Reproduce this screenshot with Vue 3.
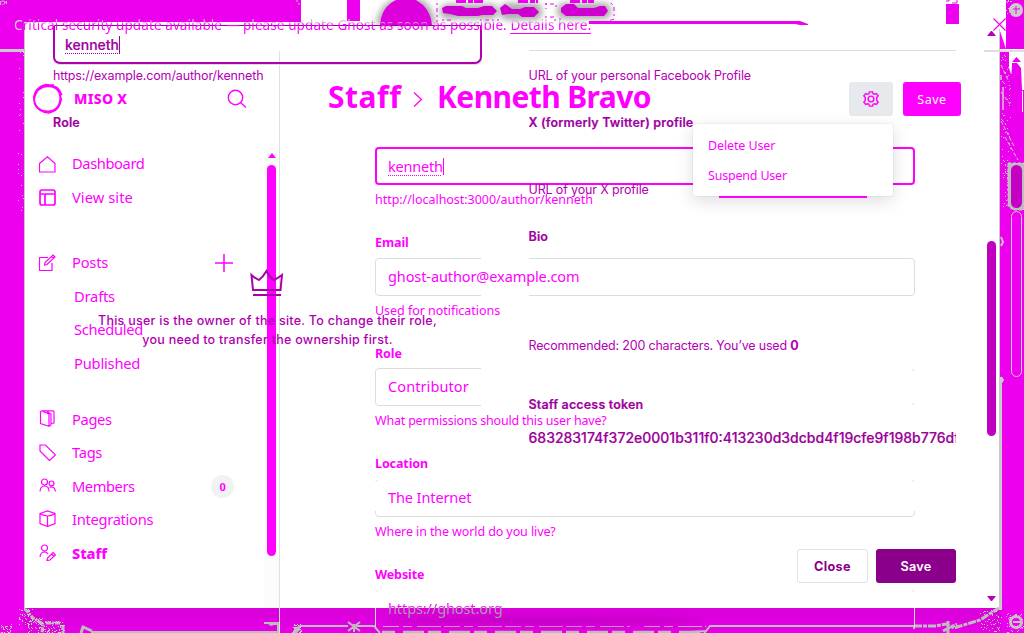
<script setup>
const nav = [
  { label: 'Dashboard', icon: 'home' },
  { label: 'View site', icon: 'layout' },
  { label: 'Posts', icon: 'edit', gap: 'gap-lg', plus: true },
  { label: 'Drafts', sub: true },
  { label: 'Scheduled', sub: true },
  { label: 'Published', sub: true },
  { label: 'Pages', icon: 'pages', gap: 'gap-md' },
  { label: 'Tags', icon: 'tag' },
  { label: 'Members', icon: 'members', badge: '0' },
  { label: 'Integrations', icon: 'box' },
  { label: 'Staff', icon: 'staff', bold: true },
]
const icons = {
  home: 'M.5 7.500 8.500 .8 16 7.500V16H.5Z',
  layout: 'M3 1H14Q16 1 16 3V14Q16 16 14 16H3Q1 16 1 14V3Q1 1 3 1ZM1 5H16M6 5V16',
  edit: 'M9 3.5H.5V16.500H13V9M14 1 16 3 8 10.500 5.500 11 6 8.500ZM12.5 2.5 14.5 4.5',
  pages: 'M3 .8H14Q15 .8 15 2V13L12 13.500M3 .8Q1.500 .8 1.500 2V13.500L10 16.200V4L4 1.500M8 1.500 12 4V15L10 16.200',
  tag: 'M1 1H6.500L16.500 11 10.500 16.500 1 7Z',
  members: 'M5.5 2A3 3 0 1 1 5.5 8A3 3 0 1 1 5.5 2M1 14.500Q1.5 9 5.5 9Q10 9 10 14.500M12.5 4A2.4 2.4 0 1 1 12.5 8.8A2.4 2.4 0 1 1 12.5 4M10.5 10.5Q15.5 8.5 16.5 14.500',
  box: 'M1 3.500 8.5 1 16 3.500V13.500L8.5 16.5 1 13.500ZM1 3.500Q5 6 8.5 6Q12 6 16 3.500M8.5 6V16.5M7 6H10',
  staff: 'M5.5 1A3 3 0 1 1 5.5 7A3 3 0 1 1 5.5 1M1 13Q1.5 8 5.5 8Q8 8 9 10M14 8.5 16.5 11 11 16 8 16.5 8.5 14ZM12.5 10 15 12.5',
}
const fields = [
  { label: 'Email', value: 'ghost-author@example.com', hint: 'Used for notifications', cls: 'f-email',
    path: 'M106 .5H4Q.5 .5 .5 4V34Q.5 37.500 4 37.5H106M154 .5H536Q539.5 .5 539.5 4V34Q539.5 37.500 536 37.5H154' },
  { label: 'Role', value: 'Contributor', hint: 'What permissions should this user have?', cls: 'f-role',
    path: 'M106 .5H4Q.5 .5 .5 4V34Q.5 37.500 4 37.5H106M537 .5L539.500 3M537 37.500L539.500 35' },
  { label: 'Location', value: 'The Internet', hint: 'Where in the world do you live?', cls: 'f-location',
    path: 'M.5 3L3 .5M537 .5L539.500 3M.5 32V34Q.5 37.500 4 37.5H536Q539.500 37.500 539.500 34V32' },
  { label: 'Website', value: 'https://ghost.org', hint: '', cls: 'f-website',
    path: 'M.5 3L3 .5M537 .5L539.500 3M.5 19V38M539.500 19V38' },
]

// Deterministic grain scattered along the window frame.
function grain(seed, count, x, y, w, h) {
  let s = seed * 7919
  const next = () => (s = (s * 16807) % 2147483647) / 2147483647
  next()
  let d = ''
  for (let i = 0; i < count; i++) {
    d += `M${Math.floor(x + next() * w)} ${Math.floor(y + next() * h)}h1v1h-1z`
  }
  return d
}
const speckles = [
  grain(71, 26, 18, 40, 6, 172),
  grain(31, 10, 0, 0, 8, 5),
  grain(93, 45, 19, 609, 14, 16),
  grain(57, 50, 28, 618, 16, 15),
  grain(55, 60, 44, 621, 21, 12),
  grain(12, 30, 0, 624, 12, 9),
  grain(47, 50, 1001, 55, 10, 120),
  grain(61, 25, 1003, 160, 6, 48),
  grain(29, 16, 1006, 0, 6, 16),
  grain(83, 60, 980, 610, 22, 22),
  grain(88, 50, 1006, 613, 18, 20),
  grain(19, 30, 292, 624, 10, 9),
].join('')
</script>

<template>
  <div class="stage">
    <svg class="layer backdrop" viewBox="0 0 1024 633" aria-hidden="true">
      <defs>
        <filter id="soft" x="-20%" y="-80%" width="140%" height="260%"><feGaussianBlur stdDeviation="3" /></filter>
        <linearGradient id="base" x2="0" y2="1"><stop stop-color="#d800d8" /><stop offset="1" stop-color="#e600e6" /></linearGradient>
      </defs>
      <path fill="#ed00ed" d="M0 0H301V22H24V633H0ZM1006 0H1024V49H1006ZM1000 52H1024V633H1000Z" />
      <path fill="url(#base)" d="M24 608H1002V633H24Z" />
      <path fill="#cacaca" d="M0 49H24V52H0ZM24 25H25V610H24ZM999 29H1000V608H999ZM999 377H1002V610H999Z" />
      <path fill="#ddd" d="M984 50H1024V52H984Z" />
      <path fill="#f0f" d="M1000 31 1006 49H1000Z" />

      <rect x="347" width="13" height="21" fill="#ed00ed" />
      <rect x="946" y="4" width="13" height="20" fill="#ed00ed" />
      <path d="M946 1h3v-1M952 3h5v-3" stroke="#ed00ed" fill="none" />
      <g fill="#aaa" filter="url(#soft)">
        <path d="M376 25Q380-2 406-3T436 25Z" />
        <rect x="440" y="4" width="58" height="15" rx="7" />
        <rect x="500" y="3" width="42" height="17" rx="7" />
        <rect x="557" y="3" width="54" height="16" rx="7" />
      </g>
      <path fill="#dd00dd" d="M380 25Q381 10 391 3L396 0H416L423 5Q431 13 432 25Z" />
      <g fill="#cf00cf">
        <path d="M442 8 446 6H462L466 8H478L484 6H492L497 11 493 15H482L478 16H458L450 14 443 13Z" />
        <path d="M500 8 505 4 512 9H520L525 7H534L539 12 534 17H522L518 14H508L502 15Z" />
        <path d="M561 8 566 4H574L578 8H594L600 6H605L608 11 604 16H566L561 12Z" />
      </g>
      <path d="M456 1H483M518 1H538M570 1H594" stroke="#ed00ed" stroke-width="4" stroke-dasharray="10 2 5 1" />
      <path d="M437 3V22M545 4H556V10M545 17H555V22M611 3 614 7V19L606 22M442 20H452M480 20H499M546 3V9M560 18V22" fill="none" stroke="#ed00ed" stroke-dasharray="2 3 4 3" />
      <path fill="#ed00ed" d="M589 21H800L808 24V25H800L795 24H589Z" />

      <path d="M0 2H8M3 0V5M297 0V3L301 5" stroke="#cacaca" fill="none" stroke-dasharray="2 2" />
      <path d="M25 609 33 618 43 624 42 633M46 623H60M63 625V633" fill="none" stroke="#bdbdbd" stroke-width="3" stroke-dasharray="5 1 2 1" />
      <path d="M81 633 83 627 92 631" fill="none" stroke="#bdbdbd" stroke-width="3" />
      <path d="M91 632H279" stroke="#bdbdbd" stroke-width="2" />
      <path fill="#bdbdbd" d="M264 622H280V633H277V625H274L271 626 268 624H264ZM292 633 295 628 300 625V630L297 633Z" />
      <path d="M279.500 608V633M375.500 608V627" stroke="#bdbdbd" />
      <path d="M300 626H348M356 626H374L380 633M348 622 360 631M348 631 360 622M354 624V632" fill="none" stroke="#bdbdbd" stroke-width="2" />
      <path d="M383 626.500H630M644 626.500H706" fill="none" stroke="#bdbdbd" stroke-dasharray="16 4 9 5 24 3" />
      <path d="M382 632H706" stroke="#bdbdbd" stroke-width="2.500" stroke-dasharray="13 8 21 4" />
      <path d="M690 632 706 631 710 626H914V629" fill="none" stroke="#bdbdbd" stroke-width="2" />
      <path d="M914 626H936L946 624 954 628 980 620 999 608M948 621V633M943 631 957 624" fill="none" stroke="#bdbdbd" stroke-width="3" stroke-dasharray="8 1 4 1" />
      <path :d="speckles" fill="#c9c9c9" />
      <ellipse cx="545" cy="621" rx="160" ry="5" fill="#b800b8" opacity=".6" filter="url(#soft)" />

      <circle cx="1016" cy="10" r="7" fill="#ccc" />
      <path d="M1016 6V14M1013 9H1020M1008 16 1011 13M1008 3 1011 6" stroke="#ed00ed" />
      <path fill="#fff" d="M1009 52H1024V90H1022L1021 68 1017 63H1012V74H1011L1009 68ZM1022 91H1023V112H1022Z" />
      <path fill="#ed00ed" d="M1012 62 1016.500 57 1021 62ZM1012 65 1017 64 1020 70 1021 80H1011Z" />
      <path d="M1001 65 1009 82M1001 92 1010 104M1001 121 1014 146M1001 119 1006 124M1005 137 1018 160" stroke="#d0d0d0" stroke-dasharray="4 2" />
      <path d="M1001 75V80M1003 87V110" stroke="#cacaca" stroke-width="1.500" />
      <path d="M1008 163H1024V210H1013L1008 206Z" fill="#bcbcbc" stroke="#ccc" stroke-dasharray="3 2" />
      <rect x="1011" y="165" width="11" height="43" rx="5.500" fill="#c400c4" />
      <rect x="1011.500" y="211.500" width="10" height="165" rx="5" fill="#ed00ed" stroke="#dcc8dc" />
      <path d="M1001 237 1003 242 1001 246M1001 377 1003 380 1001 383" fill="none" stroke="#cacaca" stroke-width="2" />
      <circle cx="1016" cy="622" r="7" fill="#c4c4c4" /><circle cx="1016" cy="622" r="4" fill="#ed00ed" />
      <path d="M1013 622H1020" stroke="#c4c4c4" stroke-width="2" />
    </svg>

    <aside class="layer sidebar">
      <header class="brand">
        <svg width="32" height="32" viewBox="0 0 32 32" fill="none" stroke="#f0f">
          <path stroke-width="2" d="M16 3Q27 3 28.500 14 28 28 16 28.500 3 28 2 16 4 4 16 3Z" />
          <path stroke-width="1.300" d="M1.500 15Q3 4 14 1.500Q27 2 30 12M2 20Q7 30 17 30Q28 28 29.500 15M6 6Q12 1 22 2" />
        </svg>
        <strong>MISO X</strong>
        <svg class="search" width="20" height="20" viewBox="0 0 20 20" fill="none" stroke="#f0f" stroke-width="1.400"><circle cx="8.500" cy="8.500" r="7.200" /><path d="M13.700 13.700 19 18.500" /></svg>
      </header>
      <nav>
        <div v-for="item in nav" :key="item.label" class="row" :class="[item.gap, { sub: item.sub, bold: item.bold }]">
          <svg v-if="item.icon" width="17" height="17" viewBox="0 0 17 17" fill="none" stroke="#f0f" :stroke-width="item.icon === 'layout' ? 1.7 : 1.2"><path :d="icons[item.icon]" /></svg>
          <span :class="'n-' + item.label.split(' ')[0].toLowerCase()">{{ item.label }}</span>
          <svg v-if="item.plus" class="plus" width="18" height="18" viewBox="0 0 18 18" stroke="#f0f" stroke-width="1.500"><path d="M0 9H18M9 0V18" /></svg>
          <b v-if="item.badge" class="badge">{{ item.badge }}</b>
        </div>
      </nav>
      <div class="track"><i class="arrow"></i><i class="thumb"></i></div>
    </aside>

    <main class="layer page">
      <header class="page-head">
        <h1>Staff</h1>
        <svg width="10" height="16" viewBox="0 0 10 16" fill="none" stroke="#f0f" stroke-width="1.300"><path d="M1 1.500 8.500 8.500 1 15.500" /></svg>
        <h1 class="who">Kenneth Bravo</h1>
        <button class="gear"><svg width="16" height="16" viewBox="0 0 18 18" fill="none" stroke="#f0f" stroke-width="1.600"><circle cx="9" cy="9" r="3.200" /><path d="M7.300 1H10.700L11.300 3 12.900 3.700 15 3 17 5.500 15.400 7.300V10.700L17 12.500 15 15 12.900 14.300 11.300 15 10.700 17H7.300L6.700 15 5.100 14.300 3 15 1 12.500 2.600 10.700V7.300L1 5.500 3 3 5.100 3.700 6.700 3Z" /></svg></button>
        <button class="save">Save</button>
      </header>
      <form>
        <div class="input focus"><span class="typed">kenneth</span></div>
        <p class="hint h-url">http://localhost:3000/author/kenneth</p>
        <section v-for="f in fields" :key="f.label" class="field" :class="f.cls">
          <label>{{ f.label }}</label>
          <div class="input">
            <svg width="540" height="38" fill="none" stroke="#ddd"><path :d="f.path" /></svg>
            <span>{{ f.value }}</span>
          </div>
          <p v-if="f.hint" class="hint">{{ f.hint }}</p>
        </section>
      </form>
    </main>

    <div class="layer modal">
      <div class="left">
        <div class="slug"><span class="typed">kenneth</span></div>
        <p class="note url">https://example.com/author/kenneth</p>
        <h2 class="user-role">Role</h2>
        <svg class="crown" width="34" height="28" viewBox="0 0 34 28" fill="none" stroke="#a0a" stroke-width="2"><path d="M3 21 1.500 6Q6 10 9 11Q13 8 16.500 2Q20 9 24 11Q28 9 32 6L30.500 21ZM3 26H31" /></svg>
        <p class="owner">This user is the owner of the site. To change their role,<br>you need to transfer the ownership first.</p>
      </div>
      <div class="right">
        <p class="note fb">URL of your personal Facebook Profile</p>
        <h2 class="x">X (formerly Twitter) profile</h2>
        <p class="note xurl">URL of your X profile</p>
        <h2 class="bio">Bio</h2>
        <p class="note rec">Recommended: 200 characters. You’ve used <b>0</b></p>
        <h2 class="token-label">Staff access token</h2>
        <p class="token">683283174f372e0001b311f0:413230d3dcbd4f19cfe9f198b776df</p>
        <div class="actions"><button class="close">Close</button><button class="save-dark">Save</button></div>
      </div>
      <div class="modal-scroll"><i class="arrow"></i><i class="thumb"></i><i class="arrow down"></i></div>
    </div>

    <div class="menu"><span class="m1">Delete User</span><span class="m2">Suspend User</span></div>
    <div class="alert"><span>Critical security update available — please update Ghost as soon as possible. <u>Details here.</u></span></div>
    <svg class="dismiss" width="13" height="13" viewBox="0 0 13 13" fill="none" stroke="#ee00ee" stroke-width="1.200"><path d="M.5 .5 12.500 12.500M12.500 .5 .5 12.500" /></svg>
  </div>
</template>

<style>
html, body { overflow: hidden; background: #fff; }
</style>
<style scoped>
* { box-sizing: border-box; }
p, h1, h2 { margin: 0; }
button { border: 0; padding: 0; font: inherit; }
svg { display: block; flex: none; }
.stage { position: relative; width: 1024px; height: 633px; overflow: hidden; background: #fff; font-family: "Noto Sans", "Open Sans", sans-serif; color: #f0f; white-space: nowrap; }
.layer { position: absolute; inset: 0; }

.sidebar { width: 280px; padding-left: 32px; border-right: 1px solid #e0e0e0; clip-path: inset(51px 0 0 0); }
.brand { display: flex; align-items: center; height: 32px; margin-top: 83px; }
.brand strong { width: 154px; padding-left: 10px; margin-top: -2px; font-size: 14px; font-weight: 800; letter-spacing: .3px; }
.brand .search { margin-left: 9px; }
nav { display: flex; flex-direction: column; margin-top: 32px; width: 204px; padding-left: 7px; }
.row { display: flex; align-items: center; height: 33.4px; font-size: 14.700px; letter-spacing: -.3px; }
.row > svg:first-child { margin-top: 1px; }
.row span { margin-left: 16px; padding-top: 1px; }
.row .n-dashboard { padding-top: 0; margin-top: -1px; letter-spacing: -.4px; }
.row .n-view { padding-top: 0; margin-top: -1px; letter-spacing: .05px; }
.row .n-posts { padding-top: 0; margin-top: -1px; letter-spacing: -.2px; }
.row.sub span { margin-left: 35px; }
.row .n-drafts, .row .n-published { letter-spacing: -.2px; }
.row .n-pages { letter-spacing: -.35px; }
.row .n-members { letter-spacing: -.45px; }
.row.bold span { font-weight: 800; letter-spacing: -.1px; padding-top: 2px; }
.gap-lg { margin-top: 31.600px; }
.gap-md { margin-top: 22.600px; }
.plus { margin-left: auto; margin-right: 3px; margin-top: 2px; }
.badge { margin-left: auto; margin-right: 2px; margin-top: 2px; width: 23px; height: 23px; line-height: 23px; border-radius: 50%; background: #f1f2f4; text-align: center; font-size: 11px; }
.track { position: absolute; right: 0; top: 147px; width: 15px; height: 461px; background: #fcfcfc; display: flex; flex-direction: column; align-items: center; padding-top: 6px; }
.arrow { border: 4.500px solid transparent; border-top: 0; border-bottom: 5px solid #f0f; }
.track .thumb { width: 9px; height: 391px; margin-top: 7px; background: #f0f; border-radius: 5px; }

.page { padding-left: 328px; }
.page-head { display: flex; align-items: center; height: 34px; margin-top: 82px; width: 633px; }
h1 { font-size: 30px; line-height: 34px; font-weight: 700; margin-top: -4px; width: 85px; letter-spacing: .5px; }
.who { margin-left: 14px; width: 412px; letter-spacing: -.6px; }
.gear { width: 44px; height: 34px; border-radius: 3px; background: #e6eaed; display: grid; place-items: center; }
.save { width: 58px; height: 34px; margin-left: 10px; border-radius: 3px; background: #f0f; color: #fff; font-size: 12.500px; letter-spacing: .5px; }
form { margin: 31px 0 0 47px; width: 540px; }
.input { position: relative; height: 38px; padding-left: 13px; font-size: 14.500px; line-height: 37px; letter-spacing: -.1px; }
.input svg { position: absolute; inset: 0; }
.input span { position: relative; }
.focus { border: 2px solid #f0f; border-radius: 4px; padding-left: 11px; line-height: 35px; letter-spacing: -.2px; }
.typed { display: inline-block; border-right: 1px solid currentColor; line-height: 17px; text-decoration: underline dotted 1px; text-underline-offset: 3px; }
.hint { height: 20px; margin-top: 4px; font-size: 12.500px; line-height: 22px; letter-spacing: -.04px; }
.h-url { margin-bottom: 23px; }
.field { height: 110px; }
.f-role { height: 111px; }
.f-role label { line-height: 24px; }
.f-role .hint { letter-spacing: -.2px; }
.f-location .hint { letter-spacing: -.1px; }
.f-role .input { letter-spacing: .1px; }
.f-website label { line-height: 24px; }
.f-website .input { line-height: 39px; }
.f-website .input span { color: transparent; background: linear-gradient(#f0f 9px, #a8a8a8 10px); background-clip: text; -webkit-background-clip: text; }
label { display: block; height: 26px; line-height: 22px; font-size: 12.500px; font-weight: 700; letter-spacing: -.1px; }

.modal { font-family: Inter, sans-serif; color: #a000a0; display: grid; grid-template-columns: 429px 427.500px; column-gap: 46.500px; padding-left: 53px; }
.slug { margin-top: 25px; height: 38.500px; border: 2px solid #b000b0; border-top: 1px solid #909; border-radius: 2px 2px 7px 7px; padding-left: 10.500px; font-size: 14px; line-height: 38px; font-weight: 500; box-shadow: 0 1px #ddd; margin-left: -.5px; }
.slug .typed { line-height: 18px; -webkit-text-stroke: .2px; }
.note { font-size: 12.500px; line-height: 18px; color: #b400b4; letter-spacing: -.14px; }
.url { margin-top: 3.500px; }
h2 { font-size: 12.500px; line-height: 18px; font-weight: 600; letter-spacing: .16px; -webkit-text-stroke: .2px; }
.user-role { margin-top: 29px; }
.crown { margin: 137px 0 0 197px; }
.owner { margin-top: 14px; text-align: center; font-size: 12.500px; line-height: 19px; font-weight: 500; letter-spacing: .26px; color: #b000b0; }
.right { overflow: hidden; }
.fb { border-top: 1px solid #ddd; margin-top: 50px; padding-top: 16px; }
.x { margin-top: 29px; }
.xurl { margin-top: 49px; }
.bio { margin-top: 29px; }
.rec { margin-top: 91px; letter-spacing: -.18px; }
.token-label { margin-top: 41px; }
.token { margin-top: 14px; font-size: 14px; line-height: 20px; font-weight: 500; color: #9a009a; overflow: hidden; -webkit-text-stroke: .2px; }
.actions { display: flex; justify-content: flex-end; gap: 8px; margin-top: 101px; }
.actions button { height: 34px; border-radius: 3px; font-size: 12.700px; }
.actions .close { width: 71px; color: #8b008b; background: #fff; border: 1px solid #e2e2e2; font-weight: 700; letter-spacing: .3px; }
.actions .save-dark { width: 80px; background: #8b008b; color: #fff; font-weight: 600; letter-spacing: .3px; }
.modal-scroll { position: absolute; left: 987px; top: 31px; width: 9px; display: flex; flex-direction: column; }
.modal-scroll .arrow { border-bottom-color: #b800b8; }
.modal-scroll .thumb { height: 195px; margin: 205px 0 160px; background: #c000c0; border-radius: 5px; }
.modal-scroll .down { transform: rotate(180deg); }

.menu { position: absolute; left: 693px; top: 124px; width: 200px; height: 72px; padding: 7px 15px; background: #fff; border-radius: 3px; box-shadow: 0 5px 18px #0002, 0 0 2px #0002; font-size: 12.500px; letter-spacing: -.12px; display: flex; flex-direction: column; }
.menu span { line-height: 30px; }
.menu .m2 { letter-spacing: -.2px; }
.menu::after { content: ""; position: absolute; left: 26px; bottom: -2px; width: 148px; height: 2px; background: #f0f; }
.alert { position: absolute; left: 14px; top: 15px; font-size: 13.500px; line-height: 20px; letter-spacing: .1px; }
.alert span { color: transparent; background: linear-gradient(90deg, #dcc8dc 10px, transparent 10px), linear-gradient(#d4b8d4 6px, #d0a0d0 7px, #f0f 8px); background-clip: text; -webkit-background-clip: text; }
.alert u { text-decoration-color: #f0f; text-underline-offset: 3px; }
.dismiss { position: absolute; left: 993px; top: 18px; }
</style>
